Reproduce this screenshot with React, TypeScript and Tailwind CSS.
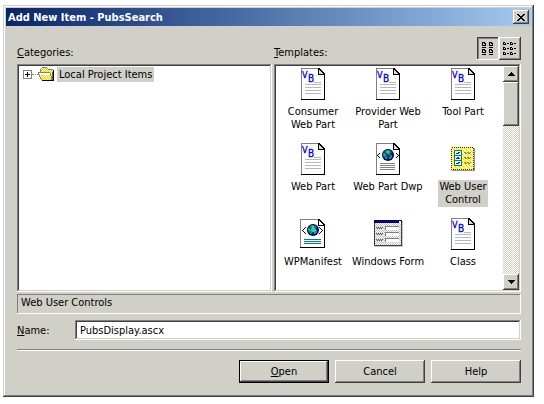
import { useState, type ReactNode } from 'react';

const raised =
  'bg-[#d0cfc8] shadow-[inset_-1px_-1px_0_#404040,inset_1px_1px_0_#ffffff,inset_-2px_-2px_0_#808080]';
const sunken =
  'bg-white p-[2px] shadow-[inset_-1px_-1px_0_#ffffff,inset_1px_1px_0_#808080,inset_-2px_-2px_0_#d0cfc8,inset_2px_2px_0_#404040]';
const dither = 'bg-[repeating-conic-gradient(#ffffff_0_25%,#d0cfc8_0_50%)] bg-[length:2px_2px]';

function Icon({ children }: { children: ReactNode }) {
  return (
    <svg width="32" height="32" viewBox="0 0 32 32" shapeRendering="crispEdges" aria-hidden="true">
      {children}
    </svg>
  );
}

function Page() {
  return (
    <>
      <path d="M4 0h18l6 6v26H4z" fill="#fff" />
      <path d="M4 0h18v1H5v30H4z" fill="#808080" />
      <path d="M27 6h1v26H4v-1h23z" fill="#000" />
      <path d="M21 0h2v1h1v1h1v1h1v1h1v1h1v2h-7z" fill="#000" />
      <path d="M22 2h1v1h1v1h1v1h1v1h-4z" fill="#d8d8d8" />
    </>
  );
}

function VbIcon() {
  return (
    <Icon>
      <Page />
      <path d="M17 14h7v1h-7zM8 16h16v1H8zM8 19h16v1H8zM8 22h16v1H8zM8 25h16v1H8z" fill="#b8b8b8" />
      <text x="5" y="10" fontSize="9" fill="#0000e0" stroke="#0000e0" strokeWidth="0.3" fontFamily="DejaVu Sans Condensed, sans-serif">V</text>
      <text x="11" y="14" fontSize="10" fill="#0000e0" stroke="#0000e0" strokeWidth="0.3" fontFamily="DejaVu Sans Condensed, sans-serif">B</text>
    </Icon>
  );
}

function Globe() {
  return (
    <>
      <circle cx="16" cy="12" r="6" fill="#000060" shapeRendering="auto" />
      <circle cx="15.500" cy="11.500" r="5" fill="#1020e0" shapeRendering="auto" />
      <path d="M14 7h3v1h2v2h-1v2h-2v-1h-2v-1h-1V8h1zM11 10h2v1h1v2h1v3h-2v-2h-1v-1h-1zM18 12h2v3h-1v1h-2v-2h1z" fill="#18a030" />
      <path d="M15 8h2v2h-2zM12 11h1v1h-1z" fill="#50d860" />
    </>
  );
}

function DwpIcon() {
  return (
    <Icon>
      <Page />
      <Globe />
      <path d="M7 10h1v1H7zM6 11h1v1H6zM5 12h1v1H5zM6 13h1v1H6zM7 14h1v1H7zM24 10h1v1h-1zM25 11h1v1h-1zM26 12h1v1h-1zM25 13h1v1h-1zM24 14h1v1h-1z" fill="#000" />
      <path d="M8 20h15v1H8zM8 22h15v1H8zM8 24h15v1H8zM8 26h15v1H8z" fill="#808080" />
    </Icon>
  );
}

function ManifestIcon() {
  return (
    <Icon>
      <path d="M3 1h18l7 6v22H3z" fill="#fff" />
      <path d="M3 1h18v1H4v27H3z" fill="#808080" />
      <path d="M27 7h1v23H3v-1h24zM21 1h2v1h1v1h1v1h1v1h1v1h1v2h-7z" fill="#000" />
      <path d="M22 3h1v1h1v1h1v1h1v1h-4z" fill="#fff" />
      <Globe />
      <path d="M15 10h3v1h1v2h-1v1h-3v-1h-1v-2h1z" fill="#20d0d8" />
      <path d="M8 9h1v1H8zM7 10h1v1H7zM6 11h1v1H6zM5 12h1v1H5zM6 13h1v1H6zM7 14h1v1H7zM8 15h1v1H8zM22 9h1v1h-1zM23 10h1v1h-1zM24 11h1v1h-1zM25 12h1v1h-1zM24 13h1v1h-1zM23 14h1v1h-1zM22 15h1v1h-1z" fill="#000080" />
      <path d="M7 21h17v1H7zM7 23h17v1H7zM7 25h17v1H7z" fill="#008080" />
    </Icon>
  );
}

function FormIcon() {
  return (
    <Icon>
      <defs>
        <pattern id="form-dots" width="2" height="2" patternUnits="userSpaceOnUse">
          <path d="M0 0h2v2H0z" fill="#fff" />
          <path d="M0 0h1v1H0zM1 1h1v1H1z" fill="#c0c0c0" />
        </pattern>
      </defs>
      <path d="M3 3h28v26H3z" fill="#c8c8c8" />
      <path d="M2 2h28v26H2z" fill="#404040" />
      <path d="M3 5h26v22H3z" fill="url(#form-dots)" />
      <path d="M2 2h28v3H2z" fill="#000080" />
      <path d="M27 3h2v2h-2z" fill="#fff" />
      {[8, 14, 20].map((y) => (
        <g key={y}>
          <path d={`M13 ${y}h14v4H13z`} fill="#808080" />
          <path d={`M14 ${y + 1}h13v3H14z`} fill="#fff" />
          <path d={`M4 ${y + 1}h1v1H4zM5 ${y + 2}h1v1H5zM6 ${y + 1}h1v1H6zM7 ${y + 2}h1v1H7zM8 ${y + 1}h1v1H8zM9 ${y + 2}h1v1H9zM10 ${y + 1}h1v1h-1z`} fill="#606060" />
        </g>
      ))}
    </Icon>
  );
}

function ControlIcon() {
  return (
    <Icon>
      <defs>
        <pattern id="control-dots" width="4" height="4" patternUnits="userSpaceOnUse">
          <path d="M0 0h4v4H0z" fill="#ffffc8" />
          <path d="M0 0h2v1H0zM2 2h2v1H2zM1 1h2v1H1zM0 3h1v1H0zM3 3h1v1H3z" fill="#ffee00" />
        </pattern>
      </defs>
      <path d="M5 5h23v23H5z" fill="#909090" />
      <path d="M4 4h23v23H4z" fill="url(#control-dots)" />
      <path d="M4.500 4.500h22v22h-22z" fill="none" stroke="#303030" strokeDasharray="1 1" />
      <path d="M7 7h8v16H7z" fill="#008080" />
      <path d="M8 8h6v4H8zM8 13h6v4H8zM8 18h6v4H8z" fill="#e4f0f4" />
      <path d="M9 10h3v1H9zM11 9h2v1h-2zM9 15h4v1H9zM10 14h2v1h-2zM9 20h3v1H9zM11 19h2v1h-2z" fill="#2030a0" />
      {[9, 14, 19].map((y) => (
        <path key={y} d={`M17 ${y}h2v1h-2zM18 ${y + 1}h2v1h-2zM20 ${y}h2v1h-2zM21 ${y + 1}h2v1h-2zM23 ${y}h1v1h-1z`} fill="#808080" />
      ))}
    </Icon>
  );
}

const templates: { name: string; lines: string[]; icon: () => ReactNode }[] = [
  { name: 'Consumer Web Part', lines: ['Consumer', 'Web Part'], icon: VbIcon },
  { name: 'Provider Web Part', lines: ['Provider Web', 'Part'], icon: VbIcon },
  { name: 'Tool Part', lines: ['Tool Part'], icon: VbIcon },
  { name: 'Web Part', lines: ['Web Part'], icon: VbIcon },
  { name: 'Web Part Dwp', lines: ['Web Part Dwp'], icon: DwpIcon },
  { name: 'Web User Control', lines: ['Web User', 'Control'], icon: ControlIcon },
  { name: 'WPManifest', lines: ['WPManifest'], icon: ManifestIcon },
  { name: 'Windows Form', lines: ['Windows Form'], icon: FormIcon },
  { name: 'Class', lines: ['Class'], icon: VbIcon },
];

function FolderIcon() {
  return (
    <svg width="17" height="15" viewBox="0 0 17 15" shapeRendering="crispEdges" aria-hidden="true">
      <defs>
        <pattern id="folder-dots" width="2" height="2" patternUnits="userSpaceOnUse">
          <path d="M0 0h2v2H0z" fill="#f4f4b0" />
          <path d="M0 0h1v1H0zM1 1h1v1H1z" fill="#f0e000" />
        </pattern>
      </defs>
      <path d="M3 2h1V1h5v1h1v1h5v10H3z" fill="url(#folder-dots)" />
      <path d="M4 0h5v1H4zM9 1h1v1H9zM10 2h5v1h-5zM3 1h1v1H3zM2 2h1v3H2z" fill="#808080" />
      <path d="M15 3h1v11H4v-1h11z" fill="#000" />
      <path d="M0 5h12v1h1v3h1v4H4v-1H3v-2H2V8H1V6H0z" fill="url(#folder-dots)" />
      <path d="M0 5h12v1H0zM0 6h1v2H0zM1 8h1v2H1zM2 10h1v2H2zM3 12h1v1H3zM12 6h1v3h-1zM13 9h1v4h-1z" fill="#808080" />
      <path d="M1 6h11v2H2V7H1z" fill="#fff" />
      <path d="M14 5h1v8h-1z" fill="#606060" />
    </svg>
  );
}

function LargeIcons() {
  return (
    <svg width="14" height="14" viewBox="0 0 14 14" shapeRendering="crispEdges" aria-hidden="true">
      {[[1, 0], [8, 0], [1, 7], [8, 7]].map(([x, y]) => (
        <g key={`${x}-${y}`} transform={`translate(${x} ${y})`}>
          <path d="M0 0h3v1h1v3H0zM0 5h4v1H0z" fill="#000" />
          <path d="M1 1h1v2H1zM2 2h1v1H2z" fill="#d0cfc8" />
        </g>
      ))}
    </svg>
  );
}

function SmallIcons() {
  return (
    <svg width="14" height="14" viewBox="0 0 14 14" shapeRendering="crispEdges" aria-hidden="true">
      {[[0, 0], [7, 0], [0, 5], [7, 5], [0, 10], [7, 10]].map(([x, y]) => (
        <g key={`${x}-${y}`} transform={`translate(${x} ${y})`}>
          <path d="M0 0h2v1h1v2H0zM4 1h2v1H4z" fill="#000" />
          <path d="M1 1h1v1H1z" fill="#d0cfc8" />
        </g>
      ))}
    </svg>
  );
}

function Arrow({ down = false }: { down?: boolean }) {
  return (
    <svg width="7" height="4" viewBox="0 0 7 4" shapeRendering="crispEdges" aria-hidden="true">
      <path d={down ? 'M0 0h7v1H6v1H5v1H4v1H3V3H2V2H1V1H0z' : 'M3 0h1v1h1v1h1v1h1v1H0V3h1V2h1V1h1z'} fill="#000" />
    </svg>
  );
}

export default function App() {
  const [selected, setSelected] = useState('Web User Control');
  const [fileName, setFileName] = useState('PubsDisplay.ascx');

  return (
    <main className="bg-white pt-[5px] pr-[10px] pb-[7px] pl-[3px] font-['DejaVu_Sans_Condensed','DejaVu_Sans',sans-serif] text-[11px] leading-[13px] text-black">
      <section
        role="dialog"
        aria-labelledby="dialog-title"
        className="bg-[#d0cfc8] p-[3px] shadow-[inset_-1px_-1px_0_#404040,inset_1px_1px_0_#d0cfc8,inset_-2px_-2px_0_#808080,inset_2px_2px_0_#ffffff]"
      >
        <header className="flex h-[18px] items-center justify-between bg-linear-to-r from-[#0a246a] to-[#a6caf0] pr-[2px] pl-[2px]">
          <h1 id="dialog-title" className="font-bold text-white">Add New Item - PubsSearch</h1>
          <button type="button" aria-label="Close" className={`flex h-[14px] w-4 items-center justify-center ${raised}`}>
            <svg width="8" height="7" viewBox="0 0 8 7" shapeRendering="crispEdges" aria-hidden="true">
              <path d="M0 0h2v1h1v1h2V1h1V0h2v1H7v1H6v1H5v1h1v1h1v1h1v1H6V6H5V5H3v1H2v1H0V6h1V5h1V4h1V3H2V2H1V1H0z" fill="#000" />
            </svg>
          </button>
        </header>

        <form className="pt-[11px] pr-[10px] pb-[11px] pl-[11px]" onSubmit={(e) => e.preventDefault()}>
          <div className="grid grid-cols-[255fr_247fr] gap-x-[2px]">
            <div className="flex h-[27px] items-end pb-[5px]">
              <h2 id="categories"><u>C</u>ategories:</h2>
            </div>
            <div className="flex h-[27px] items-start justify-between">
              <h2 id="templates" className="pt-[9px]"><u>T</u>emplates:</h2>
              <div className="flex">
                <button
                  type="button"
                  aria-label="Large icons"
                  aria-pressed="true"
                  className="flex h-[23px] w-[22px] items-center justify-center bg-[#d0cfc8] shadow-[inset_-1px_-1px_0_#ffffff,inset_1px_1px_0_#404040,inset_2px_2px_0_#808080]"
                >
                  <LargeIcons />
                </button>
                <button type="button" aria-label="Small icons" className={`flex h-[23px] w-[22px] items-center justify-center ${raised}`}>
                  <SmallIcons />
                </button>
              </div>
            </div>

            <ul role="tree" aria-labelledby="categories" className={`h-[228px] ${sunken}`}>
              <li role="treeitem" aria-expanded="false" aria-selected="true" className="flex h-[17px] items-center pl-1">
                <button type="button" aria-label="Expand" className="h-[9px] w-[9px]">
                  <svg width="9" height="9" viewBox="0 0 9 9" shapeRendering="crispEdges" aria-hidden="true">
                    <path d="M0 0h9v9H0z" fill="#808080" />
                    <path d="M1 1h7v7H1z" fill="#fff" />
                    <path d="M2 4h5v1H2zM4 2h1v5H4z" fill="#000" />
                  </svg>
                </button>
                <span className="w-[6px] border-t border-dotted border-[#808080]" />
                <FolderIcon />
                <span className="ml-[2px] bg-[#d0cfc8] px-[2px] pt-px pb-px">Local Project Items</span>
              </li>
            </ul>

            <div className={`flex h-[228px] ${sunken}`}>
              <ul role="listbox" aria-labelledby="templates" className="grid flex-1 grid-cols-[repeat(auto-fill,75px)] content-start">
                {templates.map((t) => (
                  <li key={t.name} role="option" aria-selected={selected === t.name} className="h-[75px] pt-[2px]">
                    <button type="button" onClick={() => setSelected(t.name)} className="flex w-full flex-col items-center gap-[5px] pr-px">
                      <t.icon />
                      <span className={`px-px pb-px whitespace-nowrap ${selected === t.name ? 'bg-[#d0cfc8]' : ''}`}>
                        {t.lines.map((line) => (
                          <span key={line} className="block">{line}</span>
                        ))}
                      </span>
                    </button>
                  </li>
                ))}
              </ul>
              <div className={`flex w-4 flex-col ${dither}`}>
                <button type="button" aria-label="Scroll up" className={`flex h-4 items-center justify-center ${raised}`}>
                  <Arrow />
                </button>
                <div className={`h-11 ${raised}`} />
                <div className="flex-1" />
                <button type="button" aria-label="Scroll down" className={`flex h-4 items-center justify-center ${raised}`}>
                  <Arrow down />
                </button>
              </div>
            </div>
          </div>

          <p className="mt-[2px] h-5 pt-[2px] pl-1 shadow-[inset_-1px_-1px_0_#ffffff,inset_1px_1px_0_#808080]">Web User Controls</p>

          <div className="mt-[6px] flex items-center">
            <label htmlFor="file-name" className="w-[58px]"><u>N</u>ame:</label>
            <input
              id="file-name"
              type="text"
              value={fileName}
              onChange={(e) => setFileName(e.target.value)}
              className={`h-5 min-w-0 flex-1 indent-[3px] outline-none ${sunken}`}
            />
          </div>

          <hr className="mt-[9px] h-[2px] border-t border-b border-t-[#808080] border-b-white" />

          <div className="mt-[9px] flex justify-end gap-[6px]">
            <button
              type="submit"
              className="h-[23px] w-[90px] bg-[#d0cfc8] shadow-[inset_0_0_0_1px_#000000,inset_-2px_-2px_0_#404040,inset_2px_2px_0_#ffffff,inset_-3px_-3px_0_#808080]"
            >
              <u>O</u>pen
            </button>
            <button type="button" className={`h-[23px] w-[90px] ${raised}`}>Cancel</button>
            <button type="button" className={`h-[23px] w-[90px] ${raised}`}>Help</button>
          </div>
        </form>
      </section>
    </main>
  );
}
